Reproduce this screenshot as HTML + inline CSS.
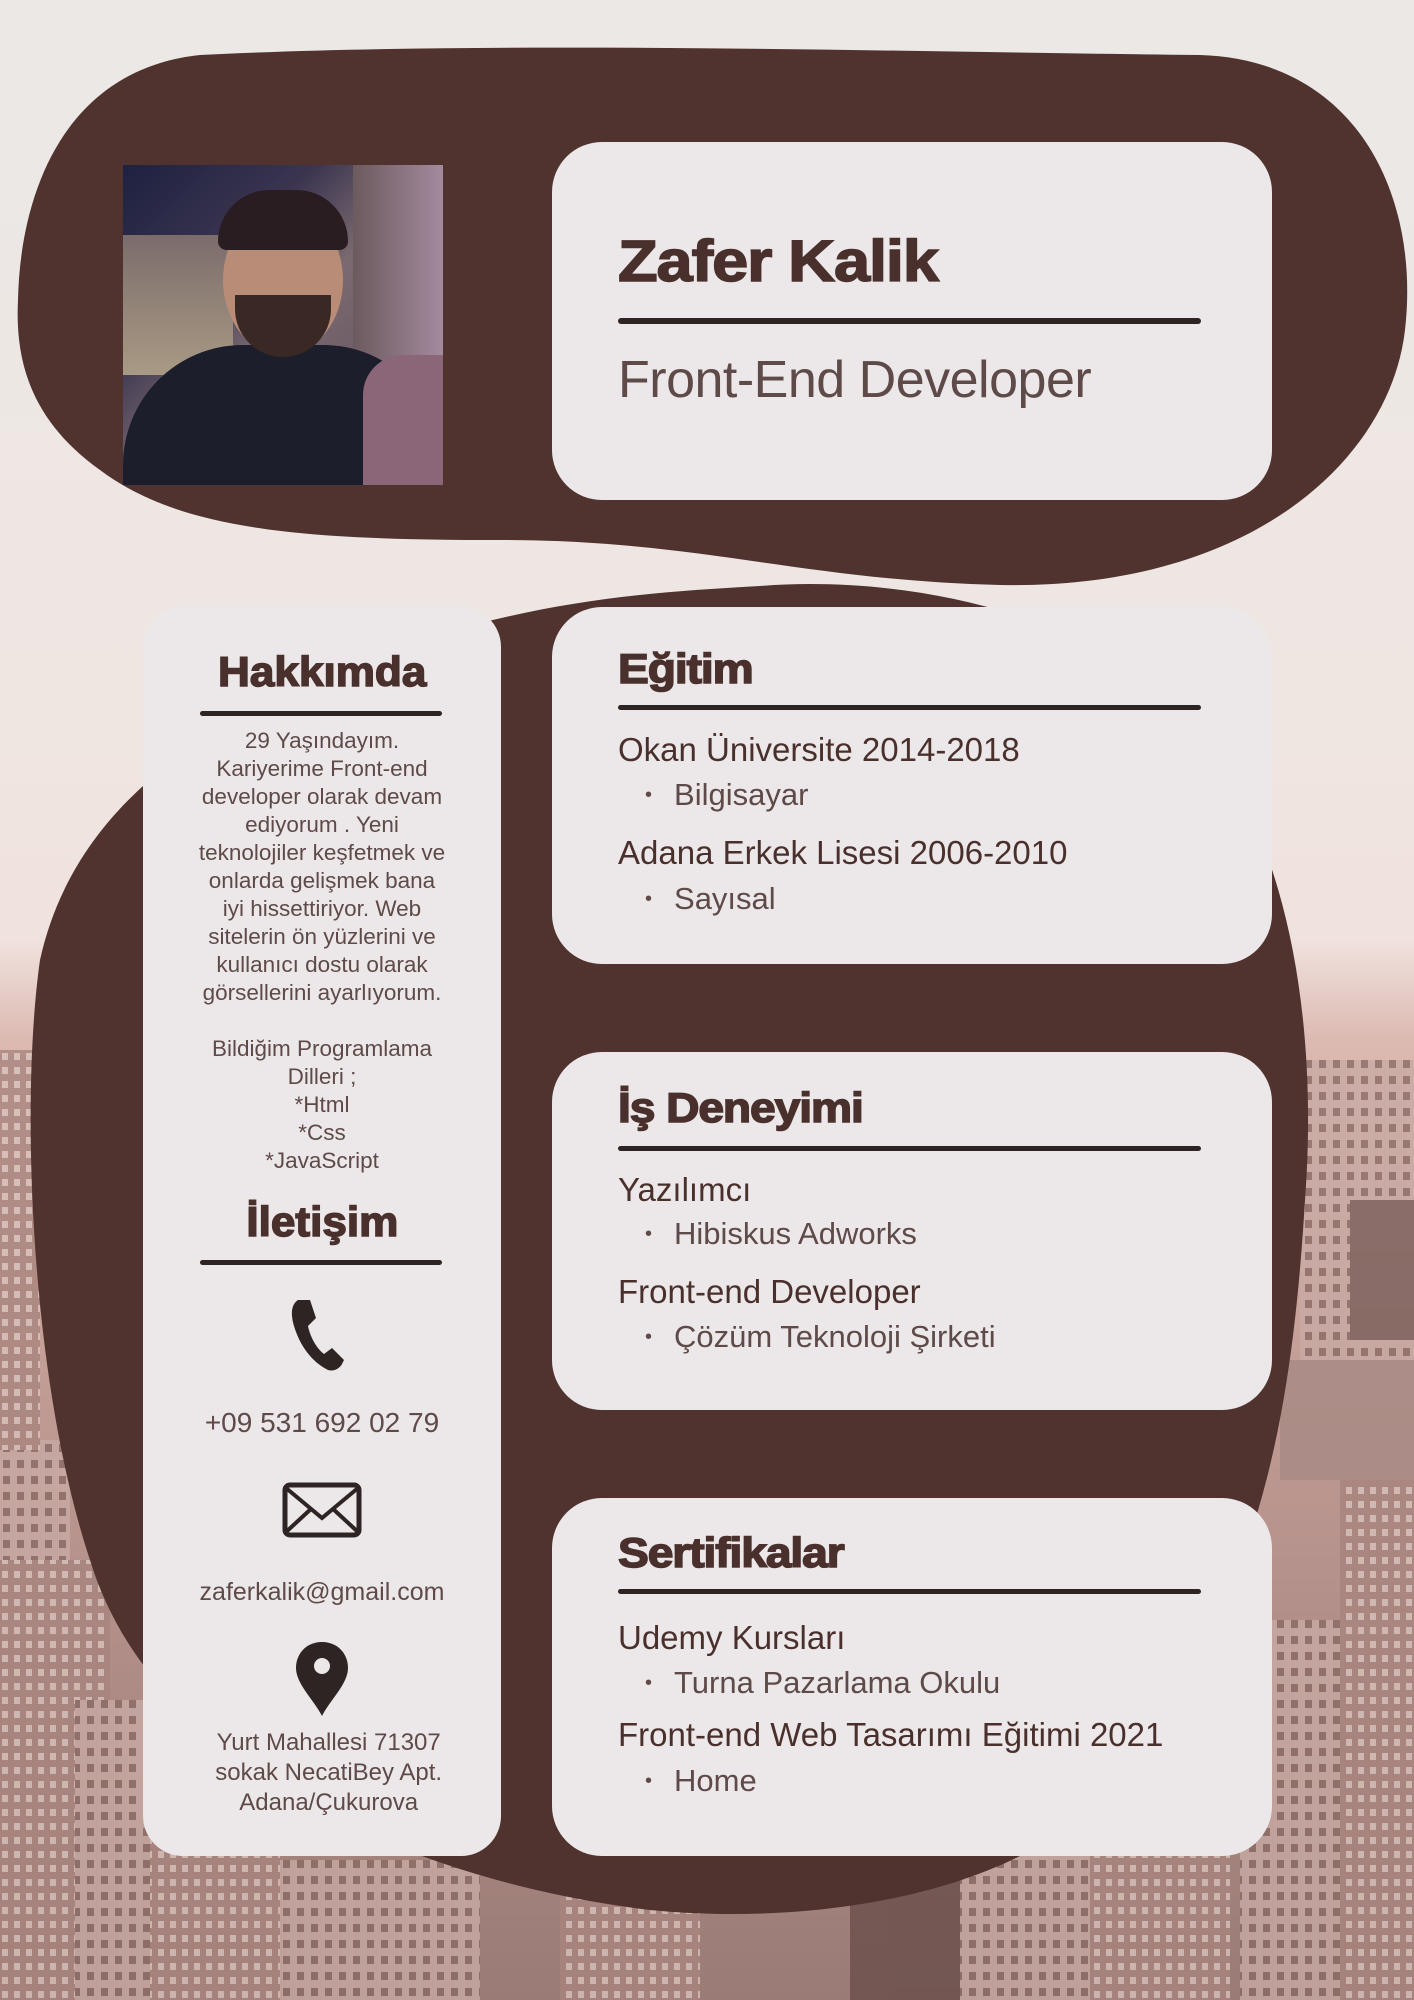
<!DOCTYPE html>
<html><head><meta charset="utf-8"><style>
*{margin:0;padding:0;box-sizing:border-box}
body{width:1414px;height:2000px;position:relative;overflow:hidden;font-family:"Liberation Sans",sans-serif;color:#4a302c;background:linear-gradient(#ebe8e6 0%,#efe6e2 35%,#f0e2de 47%,#dcbab2 52%,#c09b94 70%,#9a7b75 100%)}
.bg{position:absolute;left:0;top:0}
.card{position:absolute;background:#ece8e9;border-radius:50px}
.h{font-weight:bold;font-family:"Liberation Sans",sans-serif;letter-spacing:-1px;transform:scaleX(1.1);transform-origin:left;color:#4a302c;-webkit-text-stroke:1.5px #4a302c}
.line{position:absolute;height:5px;background:#2e2424;border-radius:3px}
.ab{position:absolute;white-space:nowrap}
.it{font-size:33px;font-weight:normal;color:#4a302c}
.bl{font-size:31px;font-weight:normal;color:#5e4a48}
.bl:before{content:"•";font-size:20px;position:relative;left:-22px;top:-4px}
.c{position:absolute;left:143px;width:358px;text-align:center;color:#5e4a48}
.ch{position:absolute;left:143px;width:358px;text-align:center;font-weight:bold;font-size:42px;color:#4a302c;-webkit-text-stroke:1.5px #4a302c}
</style></head><body>
<svg class="bg" width="1414" height="2000" viewBox="0 0 1414 2000">
<defs>
<pattern id="w" width="14" height="16" patternUnits="userSpaceOnUse"><rect width="14" height="16" fill="#c8aaa4"/><rect x="3" y="4" width="7" height="8" fill="#8a6a65"/></pattern>
<pattern id="w2" width="12" height="14" patternUnits="userSpaceOnUse"><rect width="12" height="14" fill="#a8847e"/><rect x="2" y="3" width="6" height="7" fill="#d8c2bd"/></pattern>
</defs>
<g opacity=".8">
<rect x="0" y="1440" width="70" height="560" fill="url(#w)"/>
<rect x="0" y="1560" width="110" height="440" fill="url(#w2)"/>
<rect x="75" y="1700" width="80" height="300" fill="url(#w)"/>
<rect x="0" y="1050" width="40" height="400" fill="url(#w2)"/>
<rect x="150" y="1840" width="130" height="160" fill="url(#w2)"/>
<rect x="280" y="1860" width="200" height="140" fill="url(#w)"/>
<rect x="560" y="1880" width="140" height="120" fill="url(#w2)"/>
<rect x="850" y="1860" width="110" height="140" fill="#6a4e4a"/>
<rect x="960" y="1850" width="130" height="150" fill="url(#w)"/>
<rect x="1090" y="1800" width="140" height="200" fill="url(#w2)"/>
<rect x="1240" y="1620" width="110" height="380" fill="url(#w)"/>
<rect x="1340" y="1480" width="74" height="520" fill="url(#w2)"/>
<rect x="1300" y="1060" width="114" height="300" fill="url(#w)"/>
<rect x="1280" y="1360" width="134" height="120" fill="#a88a84"/>
<rect x="1350" y="1200" width="64" height="140" fill="#7a5e5a"/>
</g>
<path d="M200 55 C500 40 900 52 1200 55 C1360 60 1420 200 1405 330 C1390 460 1250 590 1000 585 C800 580 700 540 500 540 C300 540 180 530 100 470 C30 420 15 360 18 300 C20 200 60 70 200 55Z" fill="#50332f"/>
<path d="M760 586 C900 575 1080 610 1180 710 C1280 810 1320 1000 1305 1200 C1290 1450 1250 1620 1100 1800 C1000 1900 800 1925 650 1910 C400 1880 150 1760 90 1560 C30 1380 20 1100 40 960 C80 780 250 700 420 640 C550 600 650 592 760 586Z" fill="#50332f"/>
</svg>
<!-- photo -->
<div style="position:absolute;left:123px;top:165px;width:320px;height:320px;overflow:hidden;background:linear-gradient(135deg,#1d2140 0%,#3b3550 30%,#7a6a70 50%,#6d5a66 70%,#8a6a86 100%)">
<div style="position:absolute;left:0;top:70px;width:110px;height:140px;background:linear-gradient(#7b6c6c,#a99a84)"></div>
<div style="position:absolute;left:230px;top:0;width:90px;height:320px;background:linear-gradient(90deg,#6b5a5e,#a58a9e)"></div>
<div style="position:absolute;left:0;top:180px;width:320px;height:140px;background:#1c1e2c;border-radius:120px 120px 0 0"></div>
<div style="position:absolute;left:100px;top:40px;width:120px;height:150px;background:#b98c78;border-radius:50%"></div>
<div style="position:absolute;left:95px;top:25px;width:130px;height:60px;background:#2a1d22;border-radius:60px 60px 10px 10px"></div>
<div style="position:absolute;left:112px;top:130px;width:96px;height:62px;background:#3a2824;border-radius:0 0 50px 50px"></div>
<div style="position:absolute;left:240px;top:190px;width:90px;height:130px;background:#8a6678;border-radius:40px 0 0 0"></div>
</div>
<!-- header -->
<div class="card" style="left:552px;top:142px;width:720px;height:358px"></div>
<div class="ab h" style="left:618px;top:228px;font-size:58px;transform:scaleX(1.12)">Zafer Kalik</div>
<div class="line" style="left:618px;top:318px;width:583px;height:6px"></div>
<div class="ab" style="left:618px;top:350px;font-size:52px;color:#5e4a48;letter-spacing:-.5px">Front-End Developer</div>
<!-- left card -->
<div class="card" style="left:143px;top:607px;width:358px;height:1249px;border-radius:40px"></div>
<div class="ch" style="top:648px"><span style="display:inline-block;transform:scaleX(1.05)">Hakkımda</span></div>
<div class="line" style="left:200px;top:711px;width:242px"></div>
<div class="c" style="top:727px;font-size:22.5px;line-height:28px">29 Yaşındayım.<br>Kariyerime Front-end<br>developer olarak devam<br>ediyorum . Yeni<br>teknolojiler keşfetmek ve<br>onlarda gelişmek bana<br>iyi hissettiriyor. Web<br>sitelerin ön yüzlerini ve<br>kullanıcı dostu olarak<br>görsellerini ayarlıyorum.<br><br>Bildiğim Programlama<br>Dilleri ;<br>*Html<br>*Css<br>*JavaScript</div>
<div class="ch" style="top:1198px"><span style="display:inline-block;transform:scaleX(1.05)">İletişim</span></div>
<div class="line" style="left:200px;top:1260px;width:242px"></div>
<svg class="ab" style="left:290px;top:1296px" width="64" height="76" viewBox="0 0 64 76"><path d="M8 4 C2 8 0 16 4 30 C10 50 22 66 38 74 C44 76 50 72 52 68 L54 64 L42 52 L34 58 C26 52 20 40 18 30 L26 22 L20 4 Z" fill="#2e2424"/></svg>
<div class="c" style="top:1407px;font-size:28px">+09 531 692 02 79</div>
<svg class="ab" style="left:282px;top:1482px" width="80" height="56" viewBox="0 0 80 56"><rect x="3" y="3" width="74" height="50" rx="5" fill="none" stroke="#2e2424" stroke-width="5"/><path d="M4 6 L40 36 L76 6 M4 50 L30 26 M76 50 L50 26" fill="none" stroke="#2e2424" stroke-width="4"/></svg>
<div class="c" style="top:1578px;font-size:25px">zaferkalik@gmail.com</div>
<svg class="ab" style="left:294px;top:1640px" width="56" height="76" viewBox="0 0 56 76"><path d="M28 2 C12 2 2 14 2 28 C2 44 20 60 28 76 C36 60 54 44 54 28 C54 14 44 2 28 2Z" fill="#2e2424"/><circle cx="28" cy="26" r="8" fill="#ece8e9"/></svg>
<div class="c" style="top:1728px;font-size:24px;line-height:30px">&nbsp;&nbsp;Yurt Mahallesi 71307<br>&nbsp;&nbsp;sokak NecatiBey Apt.<br>&nbsp;&nbsp;Adana/Çukurova</div>
<!-- Egitim -->
<div class="card" style="left:552px;top:607px;width:720px;height:357px"></div>
<div class="ab h" style="left:618px;top:645px;font-size:42px">Eğitim</div>
<div class="line" style="left:618px;top:705px;width:583px"></div>
<div class="ab it" style="left:618px;top:731px">Okan Üniversite 2014-2018</div>
<div class="ab bl" style="left:667px;top:777px">Bilgisayar</div>
<div class="ab it" style="left:618px;top:834px">Adana Erkek Lisesi 2006-2010</div>
<div class="ab bl" style="left:667px;top:881px">Sayısal</div>
<!-- Is -->
<div class="card" style="left:552px;top:1052px;width:720px;height:358px"></div>
<div class="ab h" style="left:618px;top:1084px;font-size:42px">İş Deneyimi</div>
<div class="line" style="left:618px;top:1146px;width:583px"></div>
<div class="ab it" style="left:618px;top:1171px">Yazılımcı</div>
<div class="ab bl" style="left:667px;top:1216px">Hibiskus Adworks</div>
<div class="ab it" style="left:618px;top:1273px">Front-end Developer</div>
<div class="ab bl" style="left:667px;top:1319px">Çözüm Teknoloji Şirketi</div>
<!-- Sert -->
<div class="card" style="left:552px;top:1498px;width:720px;height:358px"></div>
<div class="ab h" style="left:618px;top:1529px;font-size:42px">Sertifikalar</div>
<div class="line" style="left:618px;top:1589px;width:583px"></div>
<div class="ab it" style="left:618px;top:1619px">Udemy Kursları</div>
<div class="ab bl" style="left:667px;top:1665px">Turna Pazarlama Okulu</div>
<div class="ab it" style="left:618px;top:1716px">Front-end Web Tasarımı Eğitimi 2021</div>
<div class="ab bl" style="left:667px;top:1763px">Home</div>
</body></html>
